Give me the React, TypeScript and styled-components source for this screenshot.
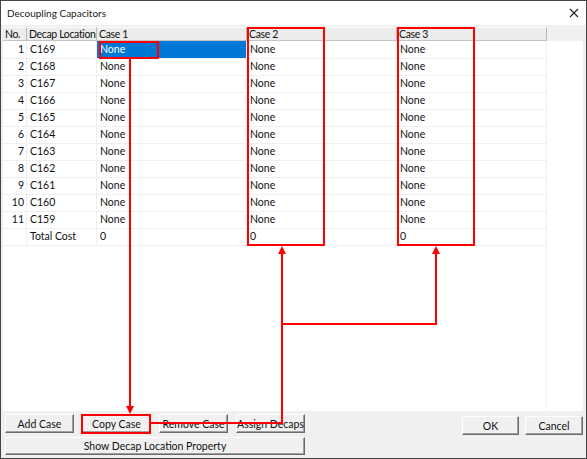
import React from 'react'
import styled, { createGlobalStyle } from 'styled-components'

const GlobalStyle = createGlobalStyle`
  html, body {
    margin: 0;
    padding: 0;
    background: #f0f0f0;
  }
  * {
    box-sizing: border-box;
  }
`

const COLS = '24px 70px 150px 150px 150px'

const rows = [
  'C169', 'C168', 'C167', 'C166', 'C165', 'C164',
  'C163', 'C162', 'C161', 'C160', 'C159',
]

const Window = styled.div`
  position: relative;
  width: 587px;
  height: 459px;
  border: 1px solid #444;
  background: #f0f0f0;
  display: flex;
  flex-direction: column;
  font-family: Lato, 'Liberation Sans', sans-serif;
  font-size: 10.5px;
  color: #111;
  overflow: hidden;
`

const TitleBar = styled.div`
  height: 24px;
  background: #fff;
  display: flex;
  align-items: center;
  justify-content: space-between;
  padding: 0 7px 1px 6px;
  font-size: 10px;
  color: #222;
`

const Body = styled.div`
  flex: 1;
  display: flex;
  flex-direction: column;
  padding: 2px 3px 0 2px;
`

const GridPane = styled.div`
  height: 384px;
  background: #fff;
  display: flex;
  flex-direction: column;
  overflow: hidden;
`

const HeaderRow = styled.div`
  display: flex;
  height: 14px;
  background: #f0f0f0;
`

const HeaderCells = styled.div`
  display: grid;
  grid-template-columns: ${COLS};
`

const HeaderCell = styled.div`
  background: #ececec;
  border-top: 1px solid #fafafa;
  border-right: 1px solid #b9b9b9;
  border-bottom: 1px solid #c4c4c4;
  padding-left: 2px;
  font-size: 10.5px;
  letter-spacing: -0.35px;
  line-height: 12px;
  white-space: nowrap;
  overflow: hidden;
`

const DataRow = styled.div`
  display: grid;
  grid-template-columns: ${COLS};
  width: 544px;
  height: 17px;
`

const Cell = styled.div<{ $right?: boolean; $selected?: boolean }>`
  border-right: 1px solid #efefef;
  border-bottom: 1px solid #efefef;
  line-height: 17px;
  padding: ${(p) => (p.$right ? '0 2px 0 0' : '0 0 0 3px')};
  text-align: ${(p) => (p.$right ? 'right' : 'left')};
  background: ${(p) => (p.$selected ? '#0078d7' : 'transparent')};
  color: ${(p) => (p.$selected ? '#fff' : 'inherit')};
  white-space: nowrap;
`

const Filler = styled.div`
  flex: 1;
  width: 544px;
  border-right: 1px solid #f2f2f2;
`

const ButtonArea = styled.div`
  display: flex;
  justify-content: space-between;
  padding: 3px 0 0 2px;
`

const LeftButtons = styled.div`
  display: grid;
  grid-template-columns: repeat(4, 69px);
  column-gap: 8px;
  row-gap: 4px;
`

const RightButtons = styled.div`
  display: flex;
  gap: 6px;
  align-items: flex-start;
  padding-top: 2px;
`

const Button = styled.button<{ $wide?: boolean; $w?: number }>`
  grid-column: ${(p) => (p.$wide ? '1 / span 4' : 'auto')};
  width: ${(p) => (p.$w ? `${p.$w}px` : 'auto')};
  height: ${(p) => (p.$wide ? '18px' : '19px')};
  background: #f0f0f0;
  border: 1px solid;
  border-color: #fff #6a6a6a #6a6a6a #fff;
  box-shadow: inset -1px -1px 0 #a0a0a0;
  font-family: inherit;
  font-size: 10.5px;
  color: #111;
  padding: 0;
  line-height: 16px;
  white-space: nowrap;
`

const Overlay = styled.svg`
  position: absolute;
  left: -1px;
  top: -1px;
  pointer-events: none;
`

const CloseIcon = () => (
  <svg width="10" height="10" viewBox="0 0 10 10">
    <path d="M1 1 L9 9 M9 1 L1 9" stroke="#222" strokeWidth="1.1" />
  </svg>
)

const Annotations = () => (
  <Overlay width="587" height="459" viewBox="0 0 587 459">
    <g fill="none" stroke="#f00" strokeWidth="2">
      <rect x="100" y="42" width="58" height="16" />
      <rect x="248" y="28" width="76" height="217" />
      <rect x="398" y="28" width="76" height="217" />
      <rect x="82" y="415" width="68" height="18" />
      <path d="M130 59 V407" />
      <path d="M151 423 H282 V252" />
      <path d="M282 324 H436 V252" />
    </g>
    <g fill="#f00">
      <path d="M126 406 L134 406 L130 414 Z" />
      <path d="M278 254 L286 254 L282 246 Z" />
      <path d="M432 254 L440 254 L436 246 Z" />
    </g>
  </Overlay>
)

export default function App() {
  return (
    <>
      <GlobalStyle />
      <Window>
        <TitleBar>
          <span>Decoupling Capacitors</span>
          <CloseIcon />
        </TitleBar>
        <Body>
          <GridPane>
            <HeaderRow>
              <HeaderCells>
                <HeaderCell>No.</HeaderCell>
                <HeaderCell>Decap Location</HeaderCell>
                <HeaderCell>Case 1</HeaderCell>
                <HeaderCell>Case 2</HeaderCell>
                <HeaderCell>Case 3</HeaderCell>
              </HeaderCells>
            </HeaderRow>
            {rows.map((loc, i) => (
              <DataRow key={loc}>
                <Cell $right>{i + 1}</Cell>
                <Cell>{loc}</Cell>
                <Cell $selected={i === 0}>None</Cell>
                <Cell>None</Cell>
                <Cell>None</Cell>
              </DataRow>
            ))}
            <DataRow>
              <Cell $right />
              <Cell>Total Cost</Cell>
              <Cell>0</Cell>
              <Cell>0</Cell>
              <Cell>0</Cell>
            </DataRow>
            <Filler />
          </GridPane>
          <ButtonArea>
            <LeftButtons>
              <Button>Add Case</Button>
              <Button>Copy Case</Button>
              <Button>Remove Case</Button>
              <Button>Assign Decaps</Button>
              <Button $wide>Show Decap Location Property</Button>
            </LeftButtons>
            <RightButtons>
              <Button $w={57}>OK</Button>
              <Button $w={58}>Cancel</Button>
            </RightButtons>
          </ButtonArea>
        </Body>
        <Annotations />
      </Window>
    </>
  )
}
